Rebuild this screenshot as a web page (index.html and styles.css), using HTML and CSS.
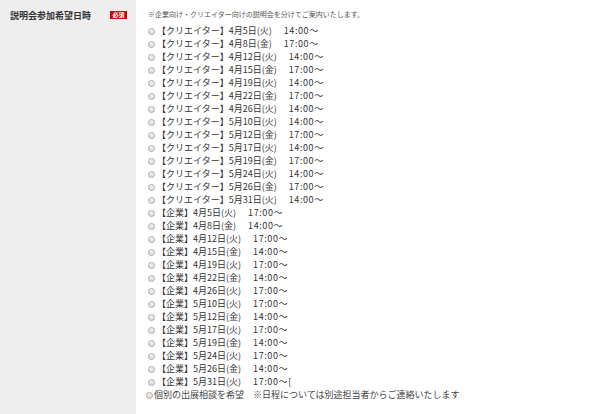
FILE: index.html
```html
<!DOCTYPE html>
<html lang="ja">
<head>
  <meta charset="UTF-8">
  <title>説明会参加希望日時</title>
  <link rel="stylesheet" href="styles.css">
</head>
<body>
  <div class="form-row">
    <div class="form-head">
      <span class="label">説明会参加希望日時</span>
      <span class="required">必須</span>
    </div>

    <div class="form-body">
      <p class="note">※企業向け・クリエイター向けの説明会を分けてご案内いたします。</p>

      <ul class="choices">
        <!-- クリエイター向け -->
        <li><label><input type="radio" name="session">【クリエイター】4月5日(火)<span class="time">14:00〜</span></label></li>
        <li><label><input type="radio" name="session">【クリエイター】4月8日(金)<span class="time">17:00〜</span></label></li>
        <li><label><input type="radio" name="session">【クリエイター】4月12日(火)<span class="time">14:00〜</span></label></li>
        <li><label><input type="radio" name="session">【クリエイター】4月15日(金)<span class="time">17:00〜</span></label></li>
        <li><label><input type="radio" name="session">【クリエイター】4月19日(火)<span class="time">14:00〜</span></label></li>
        <li><label><input type="radio" name="session">【クリエイター】4月22日(金)<span class="time">17:00〜</span></label></li>
        <li><label><input type="radio" name="session">【クリエイター】4月26日(火)<span class="time">14:00〜</span></label></li>
        <li><label><input type="radio" name="session">【クリエイター】5月10日(火)<span class="time">14:00〜</span></label></li>
        <li><label><input type="radio" name="session">【クリエイター】5月12日(金)<span class="time">17:00〜</span></label></li>
        <li><label><input type="radio" name="session">【クリエイター】5月17日(火)<span class="time">14:00〜</span></label></li>
        <li><label><input type="radio" name="session">【クリエイター】5月19日(金)<span class="time">17:00〜</span></label></li>
        <li><label><input type="radio" name="session">【クリエイター】5月24日(火)<span class="time">14:00〜</span></label></li>
        <li><label><input type="radio" name="session">【クリエイター】5月26日(金)<span class="time">17:00〜</span></label></li>
        <li><label><input type="radio" name="session">【クリエイター】5月31日(火)<span class="time">14:00〜</span></label></li>

        <!-- 企業向け -->
        <li><label><input type="radio" name="session">【企業】4月5日(火)<span class="time">17:00〜</span></label></li>
        <li><label><input type="radio" name="session">【企業】4月8日(金)<span class="time">14:00〜</span></label></li>
        <li><label><input type="radio" name="session">【企業】4月12日(火)<span class="time">17:00〜</span></label></li>
        <li><label><input type="radio" name="session">【企業】4月15日(金)<span class="time">14:00〜</span></label></li>
        <li><label><input type="radio" name="session">【企業】4月19日(火)<span class="time">17:00〜</span></label></li>
        <li><label><input type="radio" name="session">【企業】4月22日(金)<span class="time">14:00〜</span></label></li>
        <li><label><input type="radio" name="session">【企業】4月26日(火)<span class="time">17:00〜</span></label></li>
        <li><label><input type="radio" name="session">【企業】5月10日(火)<span class="time">17:00〜</span></label></li>
        <li><label><input type="radio" name="session">【企業】5月12日(金)<span class="time">14:00〜</span></label></li>
        <li><label><input type="radio" name="session">【企業】5月17日(火)<span class="time">17:00〜</span></label></li>
        <li><label><input type="radio" name="session">【企業】5月19日(金)<span class="time">14:00〜</span></label></li>
        <li><label><input type="radio" name="session">【企業】5月24日(火)<span class="time">17:00〜</span></label></li>
        <li><label><input type="radio" name="session">【企業】5月26日(金)<span class="time">14:00〜</span></label></li>
        <li><label><input type="radio" name="session">【企業】5月31日(火)<span class="time">17:00〜[</span></label></li>

        <li class="other"><label><input type="radio" name="session">個別の出展相談を希望<span class="time">※日程については別途担当者からご連絡いたします</span></label></li>
      </ul>
    </div>
  </div>
</body>
</html>
```

FILE: styles.css
```css
body {
  margin: 0;
  font-family: "Noto Sans CJK JP", "Noto Sans", sans-serif;
  color: #333;
  background: #fff;
}

.form-row {
  display: flex;
  min-height: 430px;
}

.form-head {
  width: 136px;
  flex-shrink: 0;
  background: #eeeeee;
  padding: 10px 9px 0 10px;
  box-sizing: border-box;
  display: flex;
  align-items: flex-start;
  justify-content: space-between;
}

.label {
  font-size: 9px;
  font-weight: bold;
  line-height: 12px;
  color: #333;
}

.required {
  margin-top: 1px;
  background: #d20000;
  color: #fff;
  font-size: 6px;
  font-weight: bold;
  line-height: 8px;
  padding: 0 2px;
  width: 13px;
  text-align: center;
}

.form-body {
  padding: 8px 0 0 12px;
}

.note {
  margin: 0 0 4px;
  font-size: 7px;
  line-height: 12px;
  color: #555;
}

.choices {
  list-style: none;
  margin: 0;
  padding: 0;
}

.choices li {
  height: 13px;
  font-size: 9px;
  line-height: 13px;
  white-space: nowrap;
}

.choices label {
  display: flex;
  align-items: center;
}

.choices input {
  appearance: none;
  -webkit-appearance: none;
  width: 7px;
  height: 7px;
  margin: 1px 2px 0 0;
  border: 1px solid #a9a9a9;
  border-radius: 50%;
  background: linear-gradient(#f4f4f4, #dcdcdc);
  flex-shrink: 0;
}

.time {
  margin-left: 12px;
  letter-spacing: 0.6px;
}

.other {
  color: #444;
}

.other input {
  margin-left: -2px;
  margin-right: 1px;
}

.other .time {
  margin-left: 9px;
  letter-spacing: 0;
}
```
